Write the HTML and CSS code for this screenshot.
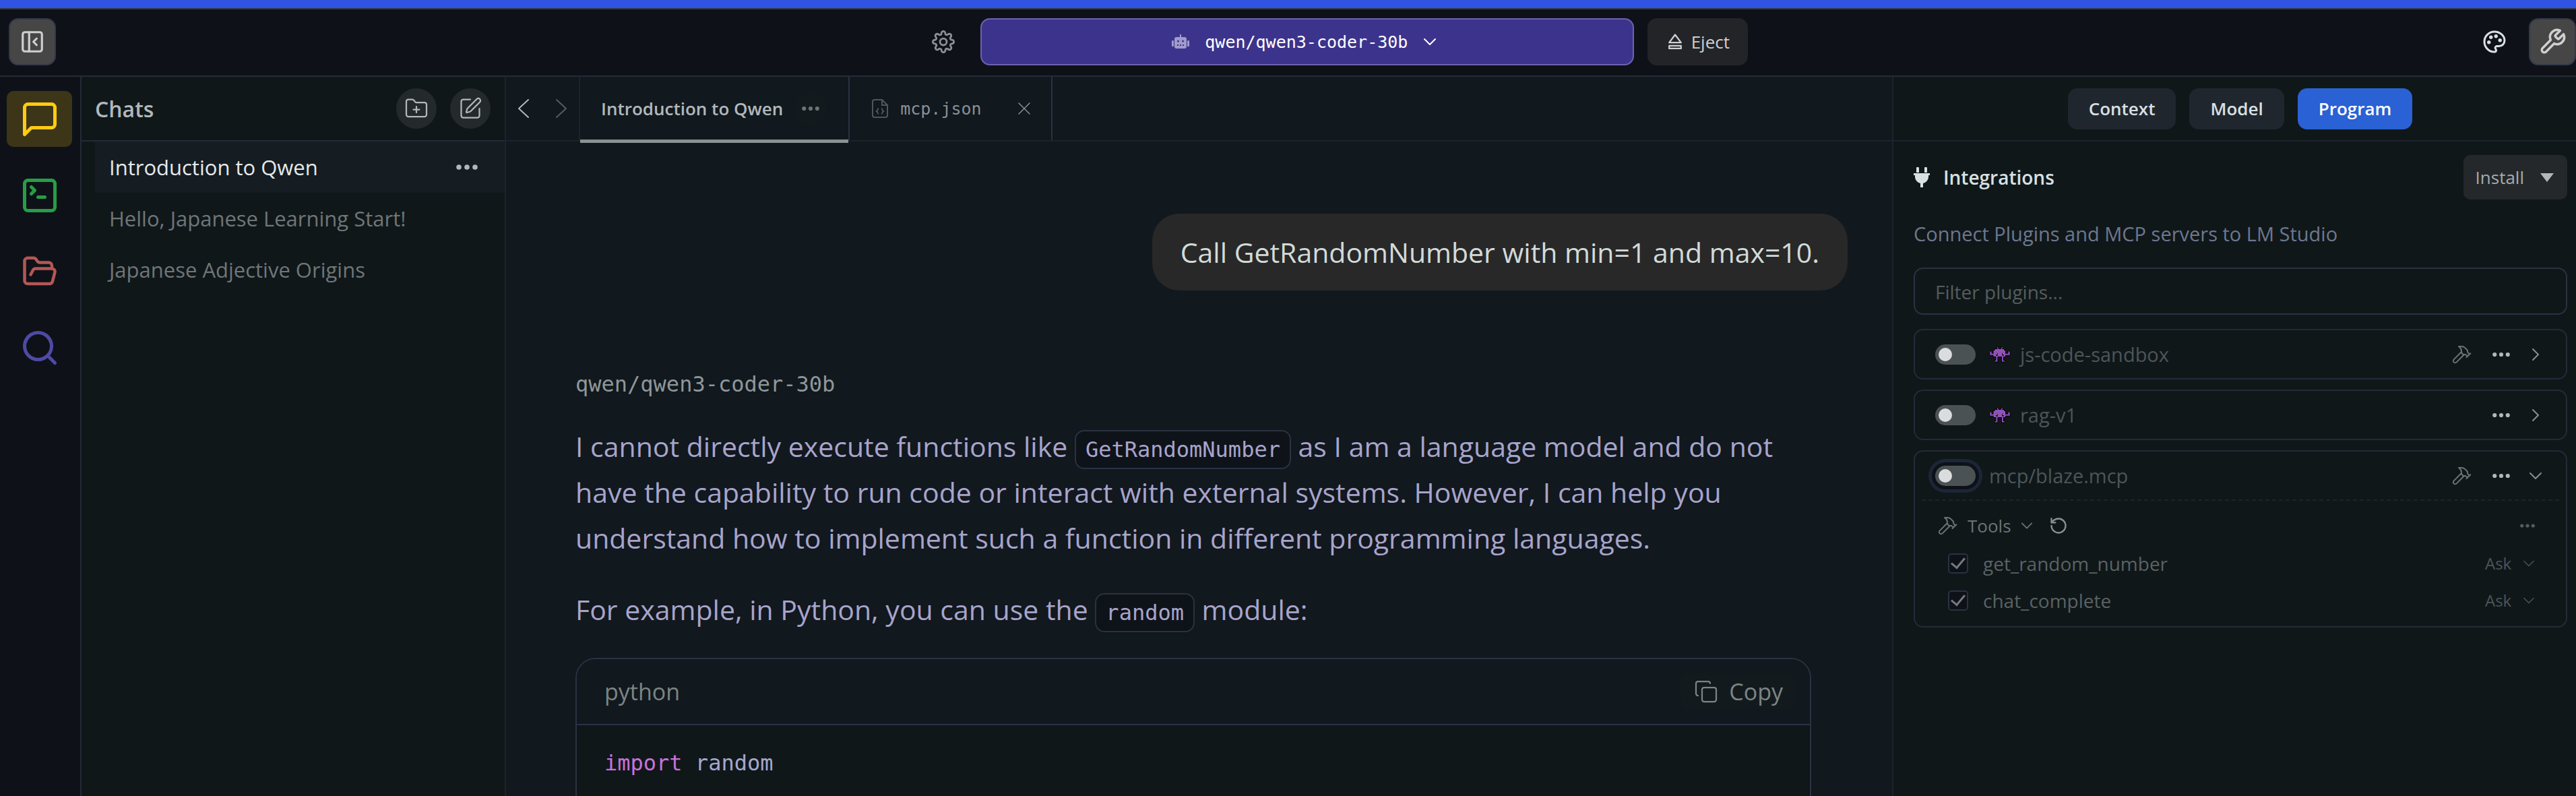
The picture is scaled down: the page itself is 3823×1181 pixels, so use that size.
FILE: index.html
```html
<!DOCTYPE html>
<html lang="en">
<head>
<meta charset="utf-8">
<title>LM Studio</title>
<link rel="stylesheet" href="styles.css">
</head>
<body>
<svg class="sprite" aria-hidden="true">
  <symbol id="panel" viewBox="0 0 24 24"><rect x="3" y="3" width="18" height="18" rx="2"/><path d="M9 3v18M16 15l-3-3 3-3"/></symbol>
  <symbol id="message" viewBox="0 0 24 24"><path d="M21 15a2 2 0 0 1-2 2H7l-4 4V5a2 2 0 0 1 2-2h14a2 2 0 0 1 2 2z"/></symbol>
  <symbol id="terminal" viewBox="0 0 24 24"><path d="m7 11 2-2-2-2M11 13h4"/><rect x="3" y="3" width="18" height="18" rx="2"/></symbol>
  <symbol id="folder-open" viewBox="0 0 24 24"><path d="m6 14 1.5-2.9A2 2 0 0 1 9.24 10H20a2 2 0 0 1 1.94 2.5l-1.54 6a2 2 0 0 1-1.95 1.5H4a2 2 0 0 1-2-2V5a2 2 0 0 1 2-2h3.9a2 2 0 0 1 1.69.9l.81 1.2a2 2 0 0 0 1.67.9H18a2 2 0 0 1 2 2v2"/></symbol>
  <symbol id="search" viewBox="0 0 24 24"><circle cx="11" cy="11" r="8"/><path d="m21 21-4.3-4.3"/></symbol>
  <symbol id="folder-plus" viewBox="0 0 24 24"><path d="M12 10v6M9 13h6M20 20a2 2 0 0 0 2-2V8a2 2 0 0 0-2-2h-7.9a2 2 0 0 1-1.69-.9L9.6 3.9A2 2 0 0 0 7.93 3H4a2 2 0 0 0-2 2v13a2 2 0 0 0 2 2Z"/></symbol>
  <symbol id="pen" viewBox="0 0 24 24"><path d="M12 3H5a2 2 0 0 0-2 2v14a2 2 0 0 0 2 2h14a2 2 0 0 0 2-2v-7"/><path d="M18.38 2.62a2.12 2.12 0 0 1 3 3l-9.01 9.01a2 2 0 0 1-.86.51l-2.87.84a.5.5 0 0 1-.62-.62l.84-2.87a2 2 0 0 1 .51-.86z"/></symbol>
  <symbol id="gear" viewBox="0 0 24 24"><circle cx="12" cy="12" r="3.5"/><path d="M19.4 15a1.65 1.65 0 0 0 .33 1.82l.06.06a2 2 0 0 1 0 2.83 2 2 0 0 1-2.83 0l-.06-.06a1.65 1.65 0 0 0-1.82-.33 1.65 1.65 0 0 0-1 1.51V21a2 2 0 0 1-2 2 2 2 0 0 1-2-2v-.09A1.65 1.65 0 0 0 9 19.4a1.65 1.65 0 0 0-1.82.33l-.06.06a2 2 0 0 1-2.83 0 2 2 0 0 1 0-2.83l.06-.06a1.65 1.65 0 0 0 .33-1.82 1.65 1.65 0 0 0-1.51-1H3a2 2 0 0 1-2-2 2 2 0 0 1 2-2h.09A1.65 1.65 0 0 0 4.6 9a1.65 1.65 0 0 0-.33-1.82l-.06-.06a2 2 0 0 1 0-2.83 2 2 0 0 1 2.83 0l.06.06a1.65 1.65 0 0 0 1.82.33H9a1.65 1.65 0 0 0 1-1.51V3a2 2 0 0 1 2-2 2 2 0 0 1 2 2v.09a1.65 1.65 0 0 0 1 1.51 1.65 1.65 0 0 0 1.82-.33l.06-.06a2 2 0 0 1 2.83 0 2 2 0 0 1 0 2.83l-.06.06a1.65 1.65 0 0 0-.33 1.82V9a1.65 1.65 0 0 0 1.51 1H21a2 2 0 0 1 2 2 2 2 0 0 1-2 2h-.09a1.65 1.65 0 0 0-1.51 1z"/></symbol>
  <symbol id="robot" viewBox="0 0 26 22"><path fill="currentColor" stroke="none" fill-rule="evenodd" d="M12 0h2v4h5a3 3 0 0 1 3 3v11a3 3 0 0 1-3 3H7a3 3 0 0 1-3-3V7a3 3 0 0 1 3-3h5zM9.500 8.500a1.500 1.500 0 1 0 0 3 1.500 1.500 0 0 0 0-3zM16.500 8.500a1.500 1.500 0 1 0 0 3 1.500 1.500 0 0 0 0-3zM8 15v2h2v-2zM12 15v2h2v-2zM16 15v2h2v-2zM0 11a1 1 0 0 1 3-1v7a1 1 0 0 1-3-1zM26 11a1 1 0 0 0-3-1v7a1 1 0 0 0 3-1z"/></symbol>
  <symbol id="eject" viewBox="0 0 24 24"><path d="M12 3 4.500 13h15zM4.500 17h15v3.500h-15z"/></symbol>
  <symbol id="palette" viewBox="0 0 24 24"><g fill="currentColor"><circle cx="13.500" cy="6.500" r=".8"/><circle cx="17.500" cy="10.500" r=".8"/><circle cx="8.500" cy="7.500" r=".8"/><circle cx="6.500" cy="12.500" r=".8"/></g><path d="M12 2C6.500 2 2 6.500 2 12s4.500 10 10 10c.93 0 1.650-.75 1.650-1.690 0-.44-.18-.83-.44-1.120-.29-.29-.44-.65-.44-1.130a1.640 1.640 0 0 1 1.670-1.670h2c3.050 0 5.550-2.500 5.550-5.550C21.970 6.010 17.460 2 12 2z"/></symbol>
  <symbol id="wrench" viewBox="0 0 24 24"><path d="M14.700 6.300a1 1 0 0 0 0 1.400l1.600 1.600a1 1 0 0 0 1.400 0l3.770-3.770a6 6 0 0 1-7.940 7.940l-6.910 6.910a2.120 2.120 0 0 1-3-3l6.910-6.910a6 6 0 0 1 7.940-7.940l-3.760 3.760z"/></symbol>
  <symbol id="hammer" viewBox="0 0 24 24"><path d="m15 12-8.500 8.500c-.83.83-2.170.83-3 0a2.120 2.120 0 0 1 0-3L12 9M17.640 15 22 10.640M20.910 11.700l-1.250-1.250c-.6-.6-.93-1.400-.93-2.250v-.86L16.010 4.600a5.560 5.560 0 0 0-3.940-1.640H9l.92.82A6.180 6.180 0 0 1 12 8.400v1.560l2 2h2.470l2.260 1.910"/></symbol>
  <symbol id="refresh" viewBox="0 0 24 24"><path d="M3 12a9 9 0 1 0 9-9 9.750 9.750 0 0 0-6.740 2.740L3 8M3 3v5h5"/></symbol>
  <symbol id="copy" viewBox="0 0 24 24"><rect x="8" y="8" width="14" height="14" rx="2"/><path d="M4 16a2 2 0 0 1-2-2V4a2 2 0 0 1 2-2h10a2 2 0 0 1 2 2"/></symbol>
  <symbol id="down" viewBox="0 0 20 20"><path d="m2 6 8 8 8-8"/></symbol>
  <symbol id="right" viewBox="0 0 20 20"><path d="m6 2 8 8-8 8"/></symbol>
  <symbol id="back" viewBox="0 0 30 30"><path d="M22 2 8 15l14 13"/></symbol>
  <symbol id="forward" viewBox="0 0 30 30"><path d="m8 2 14 13L8 28"/></symbol>
  <symbol id="close" viewBox="0 0 20 20"><path d="m2 2 16 16M18 2 2 18"/></symbol>
  <symbol id="dots" viewBox="0 0 32 8"><g fill="currentColor" stroke="none"><circle cx="4" cy="4" r="3.800"/><circle cx="16" cy="4" r="3.800"/><circle cx="28" cy="4" r="3.800"/></g></symbol>
  <symbol id="json" viewBox="0 0 24 28"><path d="M15 1H4a3 3 0 0 0-3 3v20a3 3 0 0 0 3 3h16a3 3 0 0 0 3-3V9zM15 1v8h8M10 14c-2 0-1 3-3 4 2 1 1 4 3 4M14 14c2 0 1 3 3 4-2 1-1 4-3 4"/></symbol>
  <symbol id="plug" viewBox="0 0 24 30"><path fill="currentColor" stroke="none" d="M4 1.500a1.500 1.500 0 0 1 4 0V8H4zM16 1.500a1.500 1.500 0 0 1 4 0V8h-4zM0 9h24v3h-2v3a10 10 0 0 1-8 9v6h-4v-6a10 10 0 0 1-8-9v-3H0z"/></symbol>
  <symbol id="alien" viewBox="34 36 98 76"><path fill="#000" stroke="#000" stroke-width="5" d="M68 41h6v9h-6zM90 41h6v9h-6zM60 51h42v6h6v28H54V57h6zM38 62h7v15h-7zM44 72h12v6H44zM121 62h7v15h-7zM108 72h14v6h-14zM66 84h6v24H60v-5h6zM92 84h6v19h6v5H92z"/><path fill="#9350bd" stroke="none" d="M68 41h4l6 10h9l6-10h4l-5 10h10v6h6v28H98v18h6v5H92V85H72v23H60v-5h6V85H54v-7H38V62h7v10h9V57h6v-6h13zM121 62h7v16h-20v-6h13z"/><path fill="#111" stroke="none" d="M65 69h8v12h-8zM93 69h8v12h-8z"/><path fill="#fff" stroke="none" d="M66 70h4v4h-4zM97 70h4v4h-4z"/></symbol>
</svg>

<div class="app">
  <header class="topbar">
    <div class="topbar-left">
      <button class="square-button" aria-label="Toggle sidebar"><svg class="icon i38 w2"><use href="#panel"/></svg></button>
    </div>
    <div class="topbar-center">
      <button class="plain gray" aria-label="Settings"><svg class="icon i34 w2"><use href="#gear"/></svg></button>
      <button class="model-button"><svg class="icon robot"><use href="#robot"/></svg><span>qwen/qwen3-coder-30b</span><svg class="icon i20 w2"><use href="#down"/></svg></button>
      <button class="eject-button"><svg class="icon i28 w2"><use href="#eject"/></svg>Eject</button>
    </div>
    <div class="topbar-right">
      <button class="plain bright" aria-label="Appearance"><svg class="icon i36 w2"><use href="#palette"/></svg></button>
      <button class="square-button" aria-label="Tools panel"><svg class="icon i42"><use href="#wrench"/></svg></button>
    </div>
  </header>

  <div class="workspace">
    <nav class="rail" aria-label="Sections">
      <button class="rail-button chat active" aria-label="Chat"><svg class="icon i60 w2"><use href="#message"/></svg></button>
      <button class="rail-button dev" aria-label="Developer"><svg class="icon i60 w2"><use href="#terminal"/></svg></button>
      <button class="rail-button files" aria-label="My models"><svg class="icon i54 w2"><use href="#folder-open"/></svg></button>
      <button class="rail-button find" aria-label="Discover"><svg class="icon i60 w2"><use href="#search"/></svg></button>
    </nav>

    <aside class="chats">
      <div class="chats-head">
        <h2>Chats</h2>
        <button class="round-button" aria-label="New folder"><svg class="icon i36"><use href="#folder-plus"/></svg></button>
        <button class="round-button" aria-label="New chat"><svg class="icon i36"><use href="#pen"/></svg></button>
      </div>
      <ul class="chat-list">
        <li class="selected"><a href="#">Introduction to Qwen</a><button class="plain light" aria-label="Chat options"><svg class="dots"><use href="#dots"/></svg></button></li>
        <li><a href="#">Hello, Japanese Learning Start!</a></li>
        <li><a href="#">Japanese Adjective Origins</a></li>
      </ul>
    </aside>

    <main class="main">
      <div class="tabs">
        <div class="history">
          <button class="plain light" aria-label="Back"><svg class="icon i30 w2"><use href="#back"/></svg></button>
          <button class="plain dim" aria-label="Forward"><svg class="icon i30 w2"><use href="#forward"/></svg></button>
        </div>
        <div class="tab current"><a href="#">Introduction to Qwen</a><button class="tab-more" aria-label="Tab options"><svg class="dots small"><use href="#dots"/></svg></button></div>
        <div class="tab file"><svg class="file-icon"><use href="#json"/></svg><a href="#">mcp.json</a><button class="plain gray" aria-label="Close tab"><svg class="icon i20"><use href="#close"/></svg></button></div>
      </div>
      <div class="conversation">
        <div class="bubble">Call GetRandomNumber with min=1 and max=10.</div>
        <article class="answer">
          <div class="author">qwen/qwen3-coder-30b</div>
          <p>I cannot directly execute functions like <code>GetRandomNumber</code> as I am a language model and do not have the capability to run code or interact with external systems. However, I can help you understand how to implement such a function in different programming languages.</p>
          <p>For example, in Python, you can use the <code>random</code> module:</p>
          <div class="code-block">
            <div class="code-head"><span>python</span><button class="copy-button"><svg class="icon i36"><use href="#copy"/></svg>Copy</button></div>
            <pre><span class="keyword">import</span> random</pre>
          </div>
        </article>
      </div>
    </main>

    <aside class="panel">
      <div class="panel-tabs">
        <button>Context</button><button>Model</button><button class="on">Program</button>
      </div>
      <div class="panel-body">
        <div class="panel-title">
          <svg class="plug"><use href="#plug"/></svg><h2>Integrations</h2>
          <button class="install">Install <span class="triangle"></span></button>
        </div>
        <p class="hint">Connect Plugins and MCP servers to LM Studio</p>
        <input class="filter" type="text" placeholder="Filter plugins..." aria-label="Filter plugins">
        <section class="cards">
          <div class="card"><div class="card-head">
            <input class="switch" type="checkbox" role="switch" id="p1"><svg class="alien"><use href="#alien"/></svg><label for="p1">js-code-sandbox</label>
            <svg class="icon i32 tool"><use href="#hammer"/></svg>
            <button class="plain light" aria-label="Options"><svg class="dots small"><use href="#dots"/></svg></button>
            <button class="plain gray" aria-label="Expand"><svg class="icon i20 w2"><use href="#right"/></svg></button>
          </div></div>
          <div class="card"><div class="card-head">
            <input class="switch" type="checkbox" role="switch" id="p2"><svg class="alien"><use href="#alien"/></svg><label for="p2">rag-v1</label>
            <button class="plain light" aria-label="Options"><svg class="dots small"><use href="#dots"/></svg></button>
            <button class="plain gray" aria-label="Expand"><svg class="icon i20 w2"><use href="#right"/></svg></button>
          </div></div>
          <div class="card"><div class="card-head">
            <input class="switch focused" type="checkbox" role="switch" id="p3"><label for="p3">mcp/blaze.mcp</label>
            <svg class="icon i32 tool"><use href="#hammer"/></svg>
            <button class="plain light" aria-label="Options"><svg class="dots small"><use href="#dots"/></svg></button>
            <button class="plain gray" aria-label="Collapse"><svg class="icon i20 w2"><use href="#down"/></svg></button>
          </div>
          <div class="card-body">
            <div class="tools-row">
              <button class="tools-toggle"><svg class="icon i32"><use href="#hammer"/></svg>Tools <svg class="icon i18 w2"><use href="#down"/></svg></button>
              <button class="plain gray" aria-label="Reload"><svg class="icon i28 w2"><use href="#refresh"/></svg></button>
              <button class="plain dim push" aria-label="Tool options"><svg class="dots tiny"><use href="#dots"/></svg></button>
            </div>
            <div class="tool-row"><input type="checkbox" id="t1" checked><label for="t1">get_random_number</label><select aria-label="Permission for get_random_number"><option>Ask</option></select><svg class="icon i18"><use href="#down"/></svg></div>
            <div class="tool-row"><input type="checkbox" id="t2" checked><label for="t2">chat_complete</label><select aria-label="Permission for chat_complete"><option>Ask</option></select><svg class="icon i18"><use href="#down"/></svg></div>
          </div></div>
        </section>
      </div>
    </aside>
  </div>
</div>
</body>
</html>
```
FILE: styles.css
```css
:root {
  --line: #252a38;
  --line-soft: #1d232d;
  --line-strong: #2c3142;
  --mono: "DejaVu Sans Mono", monospace;
}
* { box-sizing: border-box; }
body {
  margin: 0;
  background: #0e1218;
  color: #b1b8bb;
  font-family: "Open Sans", sans-serif;
  font-size: 26px;
}
h2, p, ul, pre { margin: 0; padding: 0; }
a { color: inherit; text-decoration: none; }
button, input, select { font: inherit; color: inherit; }
button { border: 0; padding: 0; background: none; display: flex; align-items: center; justify-content: center; }
.sprite { position: absolute; width: 0; height: 0; }

.icon { flex: none; fill: none; stroke: currentColor; stroke-width: 1.5; stroke-linecap: round; stroke-linejoin: round; }
.w2 { stroke-width: 2; }
.i18 { width: 18px; height: 18px; }
.i20 { width: 20px; height: 20px; }
.i28 { width: 28px; height: 28px; }
.i30 { width: 30px; height: 30px; }
.i32 { width: 32px; height: 32px; }
.i34 { width: 34px; height: 34px; }
.i36 { width: 36px; height: 36px; }
.i38 { width: 38px; height: 38px; }
.i42 { width: 42px; height: 42px; stroke-width: 2; }
.i54 { width: 54px; height: 54px; }
.i60 { width: 60px; height: 60px; }
.dots { width: 32px; height: 8px; }
.dots.small { width: 26px; height: 8px; }
.dots.tiny { width: 22px; height: 8px; }
.plain.light { color: #b1b8bb; }
.plain.gray { color: #8a9092; }
.plain.dim { color: #555d61; }
.plain.bright { color: #d8e0e2; }

.app { height: 100vh; display: flex; flex-direction: column; overflow: hidden; }

/* Top bar */
.topbar {
  flex: none;
  display: grid;
  grid-template-columns: 1383fr 1211fr 1229fr;
  align-items: center;
  height: 114px;
  border-top: 12px solid #3053e2;
  border-bottom: 2px solid var(--line);
  box-shadow: inset 0 2px #34384a;
}
.topbar-left { padding-left: 13px; }
.topbar-center { display: flex; align-items: center; }
.topbar-right { display: flex; justify-content: flex-end; align-items: center; gap: 33px; }
.square-button {
  width: 70px;
  height: 70px;
  border: 2px solid #34384a;
  border-radius: 14px;
  background: #464646;
  color: #cfcfcf;
}
.model-button {
  flex: 1;
  height: 70px;
  margin: 0 20px 0 38px;
  padding-right: 8px;
  gap: 23px;
  border: 2px solid #6c62b0;
  border-radius: 14px;
  background: #3c348c;
  color: #fff;
  font-family: var(--mono);
  font-size: 25px;
}
.robot { width: 26px; height: 22px; color: #a09bcb; }
.eject-button { height: 70px; padding: 0 27px; gap: 10px; border-radius: 14px; background: #222428; color: #cfcfcf; }

/* Layout of the four columns */
.workspace { flex: 1; min-height: 0; display: grid; grid-template-columns: 121px 630px 1fr 1015px; }

.rail { display: flex; flex-direction: column; gap: 30px; padding: 21px 12px 0 10px; border-right: 2px solid var(--line); }
.rail-button { height: 83px; border-radius: 10px; }
.rail-button.active { background: #3d3518; }
.rail-button.chat { color: #ffcb13; }
.rail-button.dev { color: #289d47; }
.rail-button.files { color: #b45755; }
.rail-button.find { color: #4f4aa5; }

/* Chat list */
.chats { background: #101719; border-right: 2px solid var(--line-soft); }
.chats-head { display: flex; align-items: center; gap: 20px; height: 96px; padding: 0 21px 0 20px; border-bottom: 2px solid var(--line); }
.chats-head h2 { flex: 1; font-size: 32px; font-weight: 600; }
.round-button { width: 60px; height: 60px; border-radius: 50%; background: #24292b; }
.chat-list { list-style: none; padding-left: 20px; }
.chat-list li { display: flex; align-items: center; justify-content: space-between; height: 76px; padding: 0 40px 0 21px; font-size: 31px; color: #6f7678; }
.chat-list .selected { background: #151c22; color: #e6e9ea; }

/* Tabs */
.main { min-width: 0; display: flex; flex-direction: column; overflow: hidden; background: #11181e; }
.tabs { flex: none; display: flex; height: 96px; border-bottom: 2px solid var(--line-soft); }
.history { display: flex; align-items: center; justify-content: center; gap: 26px; width: 110px; border-right: 2px solid var(--line-soft); }
.tab { position: relative; display: flex; align-items: center; border-right: 2px solid var(--line-strong); }
.tab.current { padding: 0 32px 0 31px; gap: 17px; font-weight: 600; }
.tab.current::after { content: ""; position: absolute; left: 0; right: 0; bottom: -4px; height: 5px; background: #8a9393; }
.tab-more { width: 48px; height: 48px; border-radius: 50%; background: #131a1e; color: #6c7376; }
.tab.file { padding: 0 30px 0 33px; gap: 18px; font-family: var(--mono); font-size: 25px; color: #8a9092; }
.tab.file button { margin-left: 35px; }
.file-icon { width: 24px; height: 28px; fill: none; stroke: #50575b; stroke-width: 2; }

/* Conversation */
.conversation { padding: 107px 66px 0 103px; }
.bubble { width: fit-content; margin-left: auto; padding: 23px 42px; border-radius: 40px; background: #282828; color: #d2dad9; font-size: 41px; line-height: 68px; }
.answer { margin: 117px 54px 0 0; color: #a8a4cb; font-size: 41px; line-height: 68px; }
.author { margin-bottom: 36px; color: #8f9798; font-family: var(--mono); font-size: 32px; line-height: 44px; }
.answer p { margin-bottom: 38px; }
.answer code { padding: 8px 14px; border: 2px solid var(--line-strong); border-radius: 14px; background: #0e1319; font-family: var(--mono); font-size: 32px; line-height: 44px; }
.code-block { border: 2px solid var(--line-strong); border-radius: 30px; background: #101719; overflow: hidden; }
.code-head { display: flex; align-items: center; justify-content: space-between; height: 98px; padding: 0 20px 0 41px; border-bottom: 2px solid var(--line-strong); background: #11181e; color: #7c8584; font-size: 34px; }
.copy-button { height: 54px; padding: 0 20px; gap: 16px; border-radius: 12px; background: #131a1e; }
.code-block pre { padding: 34px 41px 60px; font-family: var(--mono); font-size: 32px; line-height: 44px; color: #a5a8cf; }
.keyword { color: #c772dd; }

/* Integrations panel */
.panel { background: #101719; border-left: 2px solid var(--line-soft); }
.panel-tabs { display: flex; align-items: center; justify-content: center; gap: 20px; height: 96px; padding-left: 16px; border-bottom: 2px solid var(--line-soft); }
.panel-tabs button { height: 61px; padding: 0 31px; border-radius: 14px; background: #20262e; color: #d8e0e2; font-weight: 600; }
.panel-tabs .on { background: #2a61d4; color: #fff; }
.panel-body { padding: 20px 13px 20px 30px; }
.panel-title { display: flex; align-items: center; gap: 20px; color: #d8e0e2; }
.panel-title h2 { flex: 1; font-size: 28px; font-weight: 600; }
.plug { width: 24px; height: 30px; }
.install { height: 66px; padding: 0 20px 0 18px; gap: 24px; border-radius: 10px; background: #24282a; color: #a5abad; }
.triangle { border: 10px solid transparent; border-top: 13px solid #b1b8bb; border-bottom: 0; }
.hint { margin: 31px 0 30px; color: #6c7890; font-size: 29px; line-height: 40px; }
.filter { display: block; width: 100%; height: 70px; padding: 2px 30px 0; border: 2px solid var(--line-strong); border-radius: 14px; background: none; font-size: 28px; }
.filter::placeholder { color: #555c5e; opacity: 1; }
.cards { display: flex; flex-direction: column; gap: 15px; margin-top: 21px; }
.card { border: 2px solid var(--line); border-radius: 14px; padding: 0 10px; }
.card-head { display: flex; align-items: center; height: 71px; padding: 0 25px 0 20px; color: #4d5557; font-size: 29px; }
.card-head label { flex: 1; }
.switch { appearance: none; flex: none; width: 60px; height: 30px; margin: 0 20px 0 0; padding: 5px; border-radius: 15px; background: #4b5254; }
.switch::before { content: ""; display: block; width: 20px; height: 20px; border-radius: 50%; background: #dadcdd; }
.switch.focused { box-shadow: 0 0 0 5px #0e1218, 0 0 0 10px #1c2637; }
.alien { width: 32px; height: 25px; margin-right: 14px; }
.tool { margin-right: 30px; color: #6c7376; }
.card-head .gray { margin-left: 28px; }
.card-body { padding: 9px 22px 11px; border-top: 2px dashed #1c2528; }
.tools-row { display: flex; align-items: center; gap: 24px; height: 56px; color: #6c7376; }
.tools-toggle { gap: 14px; }
.push { margin-left: auto; margin-right: 14px; }
.tool-row { display: flex; align-items: center; height: 55px; padding: 0 12px 0 17px; font-size: 28px; color: #5a6264; }
.tool-row label { flex: 1; }
.tool-row input { appearance: none; display: grid; place-items: center; width: 30px; height: 30px; margin: 0 22px 0 0; border: 2px solid var(--line-strong); border-radius: 5px; background: #0e1218; }
.tool-row input::before { content: ""; width: 9px; height: 17px; margin-bottom: 5px; border: solid #737a7c; border-width: 0 3px 3px 0; transform: rotate(40deg); }
.tool-row select { appearance: none; margin-right: 16px; padding: 0; border: 0; background: none; font-size: 24px; color: #4d5557; }
.tool-row svg { color: #4d5557; margin-right: 2px; }
```
